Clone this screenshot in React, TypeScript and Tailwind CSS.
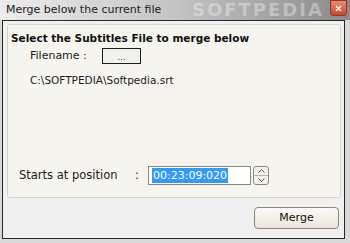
import React from "react";

const font = { fontFamily: '"DejaVu Sans", Tahoma, Verdana, sans-serif' };

export default function App() {
  return (
    <div className="w-[350px] h-[243px] bg-[#d9d9d9] overflow-hidden text-[#1a1a1a]" style={font}>
      {/* title bar */}
      <div className="relative h-[20px] flex items-center bg-gradient-to-r from-[#ececec] via-[#c4c4c4] to-[#8a8a8a]">
        <span className="absolute left-[192px] top-[0px] text-[18px] leading-[20px] font-bold tracking-[2px] text-white/35 select-none">SOFTPEDIA</span>
        <span className="relative pl-[6px] text-[11px] text-[#202020]">Merge below the current file</span>
        <div className="absolute right-[3px] top-0 w-[17px] h-[16px] rounded-b-[3px] bg-gradient-to-b from-[#e88a70] to-[#c9442c] border border-[#8c3a2a] flex items-center justify-center">
          <svg width="7" height="7" viewBox="0 0 7 7"><path d="M1 1 L6 6 M6 1 L1 6" stroke="#f2f2f2" strokeWidth="1.6" /></svg>
        </div>
      </div>
      {/* window frame */}
      <div className="ml-[2px] w-[343px] h-[219px] border border-[#262626] bg-[#f0f0f0] flex flex-col pl-[4px] pt-[3px] pr-[2px]">
        <div className="w-[334px] h-[174px] border border-[#d9d3c6] rounded-[3px] bg-[#f6f4ef] flex flex-col">
          <div className="pl-[3px] pt-[6px] h-[20px] text-[10.5px] font-bold text-[#101010]">
            Select the Subtitles File to merge below
          </div>
          <div className="flex items-center pl-[22px] mt-[3px] h-[16px]">
            <span className="text-[11px] w-[72px]">Filename :</span>
            <div className="w-[39px] h-[16px] border border-[#1c1c1c] bg-[#f3f1ec] flex items-end justify-center pb-[1px]">
              <span className="text-[9px] leading-none text-[#333]">...</span>
            </div>
          </div>
          <div className="pl-[22px] mt-[9px] text-[10.5px] h-[14px] leading-[14px]">C:\SOFTPEDIA\Softpedia.srt</div>
          <div className="flex items-center pl-[11px] mt-[79px] h-[19px]">
            <span className="text-[11.5px] w-[116px] whitespace-pre">Starts at position</span>
            <span className="text-[11.5px] w-[13px]">:</span>
            <div className="w-[103px] h-[19px] border border-[#8b8780] bg-white flex items-center pl-[3px]">
              <span className="bg-[#3399ff] text-white text-[11px] leading-[15px] px-px">00:23:09:020</span>
            </div>
            <div className="ml-[2px] w-[16px] h-[19px] border border-[#8b8780] rounded-[3px] bg-[#f3f1ec] flex flex-col">
              <div className="flex-1 flex items-center justify-center border-b border-[#b8b2a6]">
                <svg width="7" height="4" viewBox="0 0 7 4"><path d="M0.5 3.5 L3.5 0.5 L6.5 3.5" fill="none" stroke="#555" strokeWidth="1" /></svg>
              </div>
              <div className="flex-1 flex items-center justify-center">
                <svg width="7" height="4" viewBox="0 0 7 4"><path d="M0.5 0.5 L3.5 3.5 L6.5 0.5" fill="none" stroke="#555" strokeWidth="1" /></svg>
              </div>
            </div>
          </div>
        </div>
        <div className="flex justify-end pr-[3px] mt-[9px]">
          <button className="w-[85px] h-[22px] rounded-[4px] border border-[#8e8577] bg-gradient-to-b from-[#fbfaf7] to-[#ebe6dc] text-[11px] text-[#111]" style={font}>
            Merge
          </button>
        </div>
      </div>
    </div>
  );
}
